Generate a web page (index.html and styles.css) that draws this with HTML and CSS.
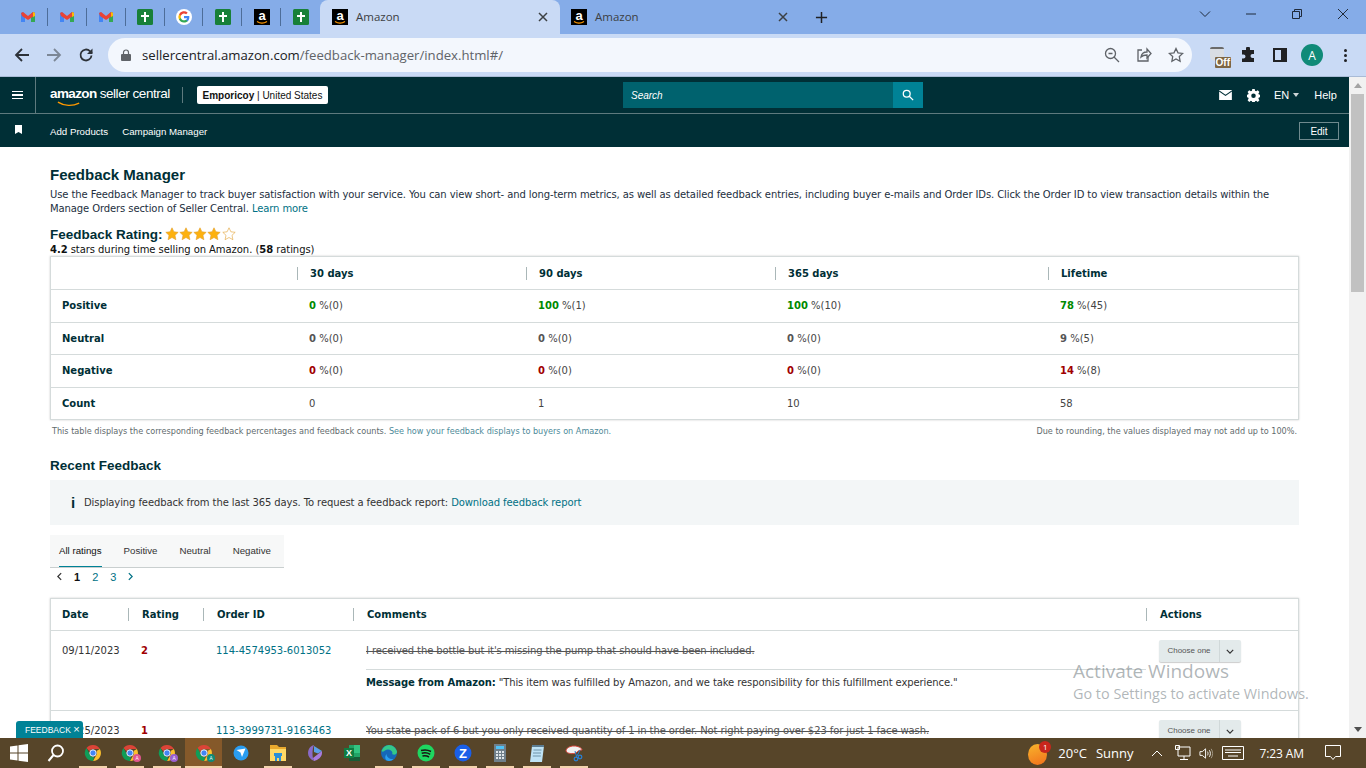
FILE: index.html
```html
<!DOCTYPE html>
<html lang="en">
  <head>
    <meta charset="UTF-8" />
    <meta name="viewport" content="width=device-width, initial-scale=1.0" />
    <title>Feedback Manager</title>
    <link rel="stylesheet" href="styles.css">
  </head>
  <body>
    <svg class="sprites" width="0" height="0">
      <symbol id="gmail" viewBox="0 0 16 16">
        <path d="M1 13V4l2-1 2 2v8z" fill="#4285f4"/>
        <path d="M11 13V5l2-2 2 1v9z" fill="#34a853"/>
        <path d="M1 4l2-1 5 4 5-4 2 1-1 3-6 4-6-4z" fill="#ea4335"/>
        <path d="M13 3l2 1v3l-2 1z" fill="#fbbc04"/>
      </symbol>
      <symbol id="tasks" viewBox="0 0 16 16">
        <rect width="16" height="16" rx="1.5" fill="#188038"/>
        <path d="M7 3h2v3h3v2H9v5H7V8H4V6h3z" fill="#fff"/>
      </symbol>
      <symbol id="google" viewBox="0 0 18 18">
        <circle cx="9" cy="9" r="9" fill="#fff"/>
        <path d="M15 9.2c0-.5 0-.9-.1-1.3H9v2.5h3.400a3 3 0 0 1-1.300 1.900v1.600h2.100c1.200-1.100 1.800-2.800 1.800-4.700z" fill="#4285f4"/>
        <path d="M9 15.200c1.700 0 3.100-.6 4.200-1.500l-2.100-1.600c-.6.4-1.300.6-2.100.6-1.600 0-3-1.100-3.500-2.600H3.400v1.700A6.200 6.200 0 0 0 9 15.200z" fill="#34a853"/>
        <path d="M5.500 10.100a3.800 3.800 0 0 1 0-2.400V6H3.400a6.200 6.200 0 0 0 0 5.800z" fill="#fbbc04"/>
        <path d="M9 5.100c.9 0 1.700.3 2.400.9l1.800-1.800A6.200 6.200 0 0 0 3.400 6l2.100 1.700C6 6.200 7.400 5.100 9 5.100z" fill="#ea4335"/>
      </symbol>
      <symbol id="amazon" viewBox="0 0 16 16">
        <rect width="16" height="16" fill="#000"/>
        <text x="8" y="11" text-anchor="middle" font-family="Liberation Sans" font-weight="700" font-size="13" fill="#fff">a</text>
        <path d="M3 12.500c3 2 7 2 10 0" fill="none" stroke="#f90" stroke-width="1.200"/>
      </symbol>
      <symbol id="chrome" viewBox="0 0 18 18">
        <path d="M9 1a8 8 0 0 1 6.900 4H9a4 4 0 0 0-3.600 2.300L2.500 4.100A8 8 0 0 1 9 1z" fill="#db4437"/>
        <path d="M15.900 5A8 8 0 0 1 9 17l3.400-6A4 4 0 0 0 12.500 7z" fill="#fbc02d"/>
        <path d="M9 17a8 8 0 0 1-6.500-12.900L5.600 10A4 4 0 0 0 10 12.900z" fill="#0f9d58"/>
        <circle cx="9" cy="9" r="3.200" fill="#4285f4" stroke="#fff" stroke-width=".9"/>
      </symbol>
      <symbol id="star" viewBox="0 0 14 14">
        <path d="M7 .8l1.900 4 4.300.5-3.200 3 .9 4.400L7 10.500l-3.900 2.200.9-4.400-3.200-3 4.300-.5z"/>
      </symbol>
    </svg>

    <div class="tabstrip">
      <div class="pinned">
        <div class="pin"><svg class="fav"><use href="#gmail"/></svg></div>
        <div class="pin"><svg class="fav"><use href="#gmail"/></svg></div>
        <div class="pin"><svg class="fav"><use href="#gmail"/></svg></div>
        <div class="pin"><svg class="fav"><use href="#tasks"/></svg></div>
        <div class="pin"><svg class="fav"><use href="#google"/></svg></div>
        <div class="pin"><svg class="fav"><use href="#tasks"/></svg></div>
        <div class="pin"><svg class="fav"><use href="#amazon"/></svg></div>
        <div class="pin last"><svg class="fav"><use href="#tasks"/></svg></div>
      </div>
      <div class="tab active">
        <svg class="fav"><use href="#amazon"/></svg>
        <span class="tab-title">Amazon</span>
        <svg class="tab-close" viewBox="0 0 10 10"><path d="M1 1l8 8M9 1l-8 8"/></svg>
      </div>
      <div class="tab">
        <svg class="fav"><use href="#amazon"/></svg>
        <span class="tab-title">Amazon</span>
        <svg class="tab-close" viewBox="0 0 10 10"><path d="M1 1l8 8M9 1l-8 8"/></svg>
      </div>
      <svg class="new-tab" viewBox="0 0 14 14"><path d="M7 1v12M1 7h12"/></svg>
      <div class="window-btns">
        <svg viewBox="0 0 12 12"><path d="M1 3.500l5 5 5-5"/></svg>
        <svg viewBox="0 0 12 12"><path d="M1 6h10"/></svg>
        <svg viewBox="0 0 12 12"><path d="M1.500 3.500h7v7h-7zM3.500 3.500v-2h7v7h-2"/></svg>
        <svg viewBox="0 0 12 12"><path d="M1 1l10 10M11 1L1 11"/></svg>
      </div>
    </div>

    <div class="toolbar">
      <svg class="nav-icon" viewBox="0 0 16 16"><path d="M15 8H2M8 2L2 8l6 6"/></svg>
      <svg class="nav-icon dim" viewBox="0 0 16 16"><path d="M1 8h13M8 2l6 6-6 6"/></svg>
      <svg class="nav-icon" viewBox="0 0 16 16"><path d="M13.500 8.500a5.500 5.500 0 1 1-1.600-4.400L14 6"/><path class="solid" d="M14.500 1.500v5.500H9z"/></svg>
      <div class="omnibox">
        <svg class="lock" viewBox="0 0 10 12"><path d="M2.500 5V3.500a2.500 2.500 0 0 1 5 0V5" fill="none" stroke="#5f6368" stroke-width="1.200"/><rect y="5" width="10" height="7" rx="1" fill="#5f6368"/></svg>
        <span class="url">sellercentral.amazon.com<span class="url-path">/feedback-manager/index.html#/</span></span>
        <div class="omni-icons">
          <svg viewBox="0 0 16 16"><circle cx="6.500" cy="6.500" r="5"/><path d="M10 10l5 5M4.500 6.500h4"/></svg>
          <svg viewBox="0 0 16 16"><path d="M6 3H2v11h10v-4"/><path d="M5 10c.5-3.500 3-5 6-5V2l4 4.500L11 11V8c-2.500 0-4.500.5-6 2z"/></svg>
          <svg viewBox="0 0 16 16"><path d="M8 1.500l2 4.300 4.700.6-3.400 3.200.8 4.700L8 12l-4.100 2.300.8-4.700L1.300 6.400 6 5.800z"/></svg>
        </div>
      </div>
      <div class="ext-icons">
        <div class="ext-off"><span class="off-cup"></span><span class="off-tag">Off</span></div>
        <svg class="ext" viewBox="0 0 16 16"><path class="solid-dark" d="M6 1.500a2 2 0 0 1 4 0V3h4v4h-1.500a2 2 0 0 0 0 4H14v4H2v-3.500H3.500a2 2 0 0 0 0-4H2V3h4z"/></svg>
        <svg class="ext" viewBox="0 0 16 16"><path class="solid-dark" d="M1 1h14v14H1zM3 3v10h6V3z" fill-rule="evenodd"/></svg>
        <div class="avatar">A</div>
        <div class="menu-dots"><i></i><i></i><i></i></div>
      </div>
    </div>

    <div class="viewport">
      <div class="page">
        <header class="topbar">
          <div class="burger"><i></i><i></i><i></i></div>
          <div class="logo">
            <span class="logo-amazon">amazon</span><span class="logo-seller">seller central</span>
            <svg class="logo-smile" viewBox="0 0 26 6"><path d="M1 1c7 4.500 16 4.500 23 1" fill="none" stroke="#f90" stroke-width="1.400"/></svg>
          </div>
          <div class="logo-sep"></div>
          <div class="account"><b>Emporicoy</b> | United States</div>
          <div class="searchbox">
            <span class="search-text">Search</span>
            <div class="search-btn">
              <svg viewBox="0 0 14 14"><circle cx="5.500" cy="5.500" r="4"/><path d="M8.500 8.500l4.500 4.500"/></svg>
            </div>
          </div>
          <div class="top-right">
            <svg class="mail" viewBox="0 0 14 11"><path d="M0 0h14v11H0z" fill="#fff"/><path d="M0 1l7 5 7-5" fill="none" stroke="#002f36" stroke-width="1.200"/></svg>
            <svg class="gear" viewBox="0 0 16 16"><path fill-rule="evenodd" d="M6.500 0h3l.4 2.200 1.400.6L13.200 1.500l2.100 2.100L14 5.500l.6 1.400 1.400.3v3l-1.400.3-.6 1.400 1.300 1.900-2.100 2.100-1.900-1.300-1.400.6-.4 1.500h-3l-.4-1.500-1.400-.6-1.900 1.300L.7 13.800 2 11.900l-.6-1.400L0 10.200v-3l1.400-.3.600-1.400L.7 3.600l2.100-2.100 1.900 1.300 1.400-.6zM8 5.500a2.800 2.800 0 1 0 0 5.600 2.800 2.800 0 0 0 0-5.600z" fill="#fff"/></svg>
            <span class="lang">EN</span><span class="caret"></span>
            <span class="help">Help</span>
          </div>
        </header>
        <nav class="subbar">
          <svg class="bookmark" viewBox="0 0 7 9"><path d="M0 0h7v9L3.500 7 0 9z" fill="#fff"/></svg>
          <a class="sub-link">Add Products</a>
          <a class="sub-link">Campaign Manager</a>
          <button class="edit-btn">Edit</button>
        </nav>

        <main class="content">
          <h1 class="page-title">Feedback Manager</h1>
          <p class="intro">Use the Feedback Manager to track buyer satisfaction with your service. You can view short- and long-term metrics, as well as detailed feedback entries, including buyer e-mails and Order IDs. Click the Order ID to view transaction details within the Manage Orders section of Seller Central. <a class="link">Learn more</a></p>

          <div class="rating-head">
            <h2>Feedback Rating:</h2>
            <div class="stars">
              <svg class="star"><use href="#star"/></svg>
              <svg class="star"><use href="#star"/></svg>
              <svg class="star"><use href="#star"/></svg>
              <svg class="star"><use href="#star"/></svg>
              <svg class="star empty"><use href="#star"/></svg>
            </div>
          </div>
          <p class="rating-sub"><b>4.2</b> stars during time selling on Amazon. (<b>58</b> ratings)</p>

          <div class="stats">
            <div class="stats-row stats-head">
              <div></div>
              <div class="th">30 days</div>
              <div class="th">90 days</div>
              <div class="th">365 days</div>
              <div class="th">Lifetime</div>
            </div>
            <div class="stats-row">
              <div class="row-label">Positive</div>
              <div><b class="good">0</b> %(0)</div>
              <div><b class="good">100</b> %(1)</div>
              <div><b class="good">100</b> %(10)</div>
              <div><b class="good">78</b> %(45)</div>
            </div>
            <div class="stats-row">
              <div class="row-label">Neutral</div>
              <div><b class="mid">0</b> %(0)</div>
              <div><b class="mid">0</b> %(0)</div>
              <div><b class="mid">0</b> %(0)</div>
              <div><b class="mid">9</b> %(5)</div>
            </div>
            <div class="stats-row">
              <div class="row-label">Negative</div>
              <div><b class="bad">0</b> %(0)</div>
              <div><b class="bad">0</b> %(0)</div>
              <div><b class="bad">0</b> %(0)</div>
              <div><b class="bad">14</b> %(8)</div>
            </div>
            <div class="stats-row">
              <div class="row-label">Count</div>
              <div>0</div>
              <div>1</div>
              <div>10</div>
              <div>58</div>
            </div>
          </div>
          <div class="stats-note">
            <span>This table displays the corresponding feedback percentages and feedback counts. <a class="link">See how your feedback displays to buyers on Amazon.</a></span>
            <span>Due to rounding, the values displayed may not add up to 100%.</span>
          </div>

          <h2 class="recent-title">Recent Feedback</h2>
          <div class="info-box">
            <span class="info-i">i</span>
            <span>Displaying feedback from the last 365 days. To request a feedback report: <a class="link">Download feedback report</a></span>
          </div>

          <div class="rating-tabs">
            <span class="rating-tab current">All ratings</span>
            <span class="rating-tab">Positive</span>
            <span class="rating-tab">Neutral</span>
            <span class="rating-tab">Negative</span>
          </div>
          <div class="pager">
            <svg viewBox="0 0 6 10"><path d="M5 1L1 5l4 4"/></svg>
            <span class="page-num current">1</span>
            <span class="page-num">2</span>
            <span class="page-num">3</span>
            <svg class="next" viewBox="0 0 6 10"><path d="M1 1l4 4-4 4"/></svg>
          </div>

          <div class="reviews">
            <div class="review-row review-head">
              <div>Date</div>
              <div class="th">Rating</div>
              <div class="th">Order ID</div>
              <div class="th">Comments</div>
              <div class="th">Actions</div>
            </div>
            <div class="review-row">
              <div>09/11/2023</div>
              <div><b class="bad">2</b></div>
              <div><a class="link">114-4574953-6013052</a></div>
              <div>
                <div class="struck">I received the bottle but it's missing the pump that should have been included.</div>
                <div class="amz-msg"><b>Message from Amazon:</b> "This item was fulfilled by Amazon, and we take responsibility for this fulfillment experience."</div>
              </div>
              <div><div class="choose"><span>Choose one</span><svg viewBox="0 0 10 6"><path d="M1 1l4 4 4-4"/></svg></div></div>
            </div>
            <div class="review-row">
              <div>08/25/2023</div>
              <div><b class="bad">1</b></div>
              <div><a class="link">113-3999731-9163463</a></div>
              <div>
                <div class="struck">You state pack of 6 but you only received quantity of 1 in the order. Not right paying over $23 for just 1 face wash.</div>
              </div>
              <div><div class="choose"><span>Choose one</span><svg viewBox="0 0 10 6"><path d="M1 1l4 4 4-4"/></svg></div></div>
            </div>
          </div>
        </main>
      </div>
      <div class="scrollbar">
        <span class="arrow up"></span>
        <div class="thumb"></div>
        <span class="arrow down"></span>
      </div>
      <div class="feedback-tag">FEEDBACK <span class="tag-x">×</span></div>
      <div class="activate">
        <div class="activate-big">Activate Windows</div>
        <div class="activate-small">Go to Settings to activate Windows.</div>
      </div>
    </div>

    <footer class="taskbar">
      <div class="task-slot">
        <svg class="t-icon" viewBox="0 0 18 18"><path d="M0 2.500l7.500-1V8.500H0zM8.500 1.300L18 0v8.500H8.500zM0 9.500h7.500v7L0 15.500zM8.500 9.500H18V18l-9.500-1.300z" fill="#fff"/></svg>
      </div>
      <div class="task-slot">
        <svg class="t-icon" viewBox="0 0 18 18"><circle cx="10.500" cy="7" r="5.500" fill="none" stroke="#fff" stroke-width="1.800"/><path d="M6.500 11l-5 6" stroke="#fff" stroke-width="2"/></svg>
      </div>
      <div class="task-slot running"><svg class="t-icon"><use href="#chrome"/></svg></div>
      <div class="task-slot running"><svg class="t-icon"><use href="#chrome"/></svg><span class="chrome-badge pink">A</span></div>
      <div class="task-slot running"><svg class="t-icon"><use href="#chrome"/></svg><span class="chrome-badge purple">A</span></div>
      <div class="task-slot current"><svg class="t-icon"><use href="#chrome"/></svg><span class="chrome-badge teal">A</span></div>
      <div class="task-slot">
        <svg class="t-icon" viewBox="0 0 18 18"><circle cx="9" cy="9" r="7.500" fill="#2a9df0"/><path d="M4.500 6l9-1.500L10 13 8.500 8.500z" fill="#fff"/></svg>
      </div>
      <div class="task-slot running">
        <svg class="t-icon" viewBox="0 0 18 18"><path d="M1 1h7l2 2h7v14H1z" fill="#e8a92e"/><path d="M1 5h16v12H1z" fill="#ffd966"/><path d="M6 10h6v7h-2v-3H8v3H6z" fill="#2a8fd8"/><path d="M5 9h8v3H5z" fill="#2a8fd8"/></svg>
      </div>
      <div class="task-slot">
        <svg class="t-icon" viewBox="0 0 18 18"><path d="M8 1c-4 1-6 4.500-6 8s2 6 6 8c-2-3-2-12 0-16z" fill="#8a6ac8"/><path d="M8 2l8 5-4 2.500L8 8z" fill="#5aa0e8"/><path d="M16 9c0 4-4 7-8 8l-1-3 9-7z" fill="#a87ce0"/></svg>
      </div>
      <div class="task-slot">
        <svg class="t-icon" viewBox="0 0 18 18"><path d="M6 1h11v16H6z" fill="#21a366"/><path d="M11 1h6v8h-6z" fill="#33c481"/><path d="M6 13h11v4H6z" fill="#185c37"/><rect x="1" y="4" width="10" height="10" fill="#107c41"/><text x="6" y="12" text-anchor="middle" font-family="Liberation Sans" font-weight="700" font-size="9" fill="#fff">X</text></svg>
      </div>
      <div class="task-slot running">
        <svg class="t-icon" viewBox="0 0 18 18"><circle cx="9" cy="9" r="8" fill="#1668b8"/><path d="M1.500 7C3 3 6 1 9 1c4 0 7 3 8 6.500.3 2.500-2 3.500-4 3-1-.2-1-1-.5-1.500C12 6 8 4.500 5 6.500 3 8 2 8 1.500 7z" fill="#34c88a"/><path d="M6.500 10c0 3 3 5.500 7 5-1 1-3 2-4.500 2-3.500 0-5-3.500-2.500-7z" fill="#2aa0f0"/></svg>
      </div>
      <div class="task-slot running">
        <svg class="t-icon" viewBox="0 0 18 18"><circle cx="9" cy="9" r="8.500" fill="#1ed760"/><path d="M4 6.500c3.500-1 7-.7 10 1M4.700 9.300c3-.8 6-.5 8.500 1M5.500 12c2.500-.5 4.500-.3 6.500 1" fill="none" stroke="#191414" stroke-width="1.500"/></svg>
      </div>
      <div class="task-slot running">
        <svg class="t-icon" viewBox="0 0 18 18"><circle cx="9" cy="9" r="8.500" fill="#1a5fe8"/><text x="9" y="13.500" text-anchor="middle" font-family="Liberation Sans" font-weight="700" font-size="13" fill="#fff">Z</text></svg>
      </div>
      <div class="task-slot running">
        <svg class="t-icon" viewBox="0 0 18 18"><rect x="3" y="0" width="12" height="18" fill="#6f7f8a"/><rect x="5" y="2" width="8" height="3" fill="#4fc3f7"/><path d="M5 7h2v2H5zM8 7h2v2H8zM11 7h2v2h-2zM5 10h2v2H5zM8 10h2v2H8zM11 10h2v2h-2zM5 13h2v2H5zM8 13h2v2H8zM11 13h2v2h-2z" fill="#dfe6ea"/></svg>
      </div>
      <div class="task-slot running">
        <svg class="t-icon" viewBox="0 0 18 18"><path d="M4 2h12l-2 16H2z" fill="#bfe3f5"/><path d="M4 1h12v2H4z" fill="#5c7d92"/><path d="M5.500 6h8M5 9h8M4.800 12h8" stroke="#6f93a8"/></svg>
      </div>
      <div class="task-slot running">
        <svg class="t-icon" viewBox="0 0 18 18"><path d="M1 7c0-3 4-5 8-5s8 2 8 4c-3 0-4 1-6 3-3 1-9 1-10-2z" fill="#f2f2f2" stroke="#d9453b"/><circle cx="11" cy="15" r="1.800" fill="none" stroke="#2a7fd0" stroke-width="1.300"/><circle cx="15" cy="13" r="1.800" fill="none" stroke="#2a7fd0" stroke-width="1.300"/><path d="M10 7l2 7M15 6l-3 6" stroke="#2a7fd0"/></svg>
      </div>

      <div class="tray">
        <div class="weather"><span class="sun"></span><span class="sun-badge">1</span></div>
        <span class="temp">20°C</span>
        <span class="sky">Sunny</span>
        <svg class="tray-chev" viewBox="0 0 12 8"><path d="M1 7l5-5 5 5"/></svg>
        <svg class="tray-net" viewBox="0 0 16 16"><path d="M3 2h12v9H3zM9 11v3M5 14.500h8M.5.500h4v4h-4z"/></svg>
        <svg class="tray-vol" viewBox="0 0 16 16"><path d="M1 6h2.500L7 3v10l-3.500-3H1zM9 6c.8 1.300.8 2.700 0 4M11 4.500c1.500 2 1.500 5 0 7"/><path class="faint" d="M13 3c2 3 2 7 0 10"/></svg>
        <svg class="tray-kbd" viewBox="0 0 22 14"><path d="M.5.500h21v13H.5zM3 4h16M3 6.500h16M6 10h10" /></svg>
        <span class="clock">7:23 AM</span>
        <svg class="tray-note" viewBox="0 0 16 16"><path d="M.5.500h15v11h-5l-2.500 3-2.500-3h-5z"/></svg>
      </div>
    </footer>
  </body>
</html>
```

FILE: styles.css
```css
* {
  margin: 0;
  padding: 0;
  box-sizing: border-box;
}

body,
html {
  height: 100%;
  width: 100%;
  overflow: hidden;
}

body {
  display: flex;
  flex-direction: column;
  font-family: "DejaVu Sans", Verdana, sans-serif;
  font-size: 10px;
  color: #0f1111;
}

.sprites {
  position: absolute;
}

/* browser chrome */

.tabstrip {
  height: 34px;
  flex: none;
  background-color: #85ace8;
  display: flex;
  align-items: flex-end;
  font-family: "Open Sans", sans-serif;
  font-size: 11px;
}

.pinned {
  display: flex;
  width: 320px;
  height: 34px;
  padding-left: 9px;
}

.pin {
  width: 39px;
  height: 34px;
  display: flex;
  align-items: center;
  justify-content: center;
  position: relative;
}

.pin::after {
  content: "";
  position: absolute;
  right: 0;
  top: 8px;
  height: 18px;
  width: 1px;
  background-color: #4d6d99;
}

.pin.last::after {
  display: none;
}

.fav {
  width: 16px;
  height: 16px;
  flex: none;
}

.tab {
  width: 240px;
  height: 34px;
  display: flex;
  align-items: center;
  padding: 0 12px 0 11px;
  color: #3c4043;
}

.tab.active {
  background-color: #c9daf5;
  border-radius: 8px 8px 0 0;
  padding-left: 12px;
}

.tab-title {
  margin: -2px 0 0 8px;
  flex: 1;
  font-size: 11.500px;
}

.tab-close {
  width: 10px;
  height: 10px;
  fill: none;
  stroke: #3c4043;
  stroke-width: 1.500;
}

.new-tab {
  width: 13px;
  height: 13px;
  margin: 0 0 10px 15px;
  fill: none;
  stroke: #202124;
  stroke-width: 1.600;
}

.window-btns {
  margin-left: auto;
  display: flex;
  gap: 34px;
  padding: 0 17px 14px 0;
}

.window-btns svg {
  width: 12px;
  height: 12px;
  fill: none;
  stroke: #1f2a3a;
  stroke-width: 1;
}

.toolbar {
  height: 43px;
  flex: none;
  background-color: #c9daf5;
  border-bottom: 1px solid #a9bbd6;
  display: flex;
  align-items: center;
  padding: 0 0 0 14px;
}

.nav-icon {
  width: 16px;
  height: 16px;
  margin-right: 16px;
  fill: none;
  stroke: #2c3138;
  stroke-width: 1.800;
}

.nav-icon.dim {
  stroke: #7c8796;
}

.nav-icon .solid {
  fill: #2c3138;
  stroke: none;
}

.omnibox {
  width: 1084px;
  height: 34px;
  margin-left: -2px;
  background-color: #f3f7fd;
  border-radius: 17px;
  display: flex;
  align-items: center;
  padding: 0 8px 0 13px;
}

.lock {
  width: 10px;
  height: 12px;
  flex: none;
}

.url {
  margin-left: 11px;
  font-family: "Open Sans", sans-serif;
  font-size: 13.170px;
  color: #202124;
}

.url-path {
  color: #5f6368;
}

.omni-icons {
  margin-left: auto;
  display: flex;
  gap: 16px;
}

.omni-icons svg {
  width: 16px;
  height: 16px;
  fill: none;
  stroke: #5f6368;
  stroke-width: 1.300;
}

.ext-icons {
  flex: 1;
  display: flex;
  align-items: center;
  padding-left: 18px;
}

.ext-off {
  width: 21px;
  height: 22px;
  position: relative;
  margin-top: 5px;
}

.off-cup {
  position: absolute;
  left: 0;
  top: 0;
  width: 14px;
  height: 14px;
  border-radius: 2px 2px 5px 5px;
  background-color: #d9dde3;
  border-top: 2px solid #6b6b6b;
}

.off-tag {
  position: absolute;
  right: 0;
  bottom: 1px;
  padding: 0 1px;
  background-color: #7d6644;
  color: #fff;
  font-family: "Liberation Sans", sans-serif;
  font-size: 10px;
  font-weight: 700;
  line-height: 11px;
  border-radius: 1px;
}

.ext {
  width: 16px;
  height: 16px;
  margin-left: 0;
}

.ext-off + .ext {
  margin-left: 9px;
}

.ext + .ext {
  margin-left: 16px;
}

.solid-dark {
  fill: #202124;
}

.avatar {
  width: 22px;
  height: 22px;
  margin-left: 13px;
  border-radius: 50%;
  background-color: #0f8a78;
  color: #fff;
  font-family: "Open Sans", sans-serif;
  font-size: 12px;
  display: flex;
  align-items: center;
  justify-content: center;
}

.menu-dots {
  margin-left: 21px;
  display: flex;
  flex-direction: column;
  gap: 2px;
}

.menu-dots i {
  width: 3px;
  height: 3px;
  border-radius: 50%;
  background-color: #202124;
}

/* seller central page */

.viewport {
  flex: 1;
  min-height: 0;
  display: flex;
  position: relative;
}

.page {
  flex: 1;
  min-width: 0;
  overflow: hidden;
}

.topbar {
  height: 37px;
  background-color: #002f36;
  border-bottom: 1px solid #5e7a7e;
  display: flex;
  align-items: center;
  color: #fff;
  font-family: "Liberation Sans", sans-serif;
}

.burger {
  width: 36px;
  height: 36px;
  border-right: 1px solid #5e7a7e;
  display: flex;
  flex-direction: column;
  justify-content: center;
  gap: 2px;
  padding: 0 12px;
  flex: none;
}

.burger i {
  height: 1.500px;
  background-color: #fff;
}

.logo {
  margin-left: 14px;
  width: 132px;
  position: relative;
  display: flex;
  align-items: baseline;
  flex: none;
  padding-bottom: 3px;
}

.logo-amazon {
  font-size: 13.500px;
  font-weight: 700;
  letter-spacing: -0.6px;
}

.logo-seller {
  font-size: 13.500px;
  margin-left: 3px;
  letter-spacing: -0.45px;
}

.logo-smile {
  position: absolute;
  left: 7px;
  bottom: -3px;
  width: 24px;
  height: 6px;
}

.logo-sep {
  width: 1px;
  height: 16px;
  background-color: #5e7a7e;
  flex: none;
}

.account {
  margin-left: 14px;
  width: 131px;
  height: 18px;
  background-color: #fff;
  color: #0f1111;
  border-radius: 2px;
  font-size: 10px;
  display: flex;
  align-items: center;
  justify-content: center;
  white-space: pre;
  flex: none;
}

.searchbox {
  margin-left: 295px;
  width: 300px;
  height: 26px;
  background-color: #00626e;
  display: flex;
  align-items: center;
  justify-content: space-between;
  padding-left: 8px;
  flex: none;
}

.search-text {
  font-size: 10px;
  font-style: italic;
}

.search-btn {
  width: 30px;
  height: 26px;
  background-color: #008296;
  display: flex;
  align-items: center;
  justify-content: center;
}

.search-btn svg {
  width: 12px;
  height: 12px;
  fill: none;
  stroke: #fff;
  stroke-width: 1.500;
}

.top-right {
  flex: 1;
  display: flex;
  align-items: center;
  padding-left: 296px;
  font-size: 11px;
}

.mail {
  width: 13px;
  height: 10px;
}

.gear {
  width: 13px;
  height: 13px;
  margin-left: 15px;
}

.lang {
  margin-left: 14px;
}

.caret {
  margin-left: 4px;
  border: 3.500px solid transparent;
  border-top: 4px solid #ccd5d7;
  border-bottom: 0;
}

.help {
  margin-left: 15px;
}

.subbar {
  height: 33px;
  background-color: #002f36;
  display: flex;
  align-items: center;
  padding: 1px 10px 0 15px;
  color: #fff;
  font-family: "Liberation Sans", sans-serif;
}

.bookmark {
  width: 7px;
  height: 9px;
  margin: -3px 28px 0 0;
}

.sub-link {
  margin-right: 14px;
  font-size: 9.700px;
}

.edit-btn {
  margin-left: auto;
  width: 40px;
  height: 18px;
  background: none;
  border: 1px solid #6f8a8e;
  color: #fff;
  font-family: "Liberation Sans", sans-serif;
  font-size: 10px;
}

.content {
  padding: 20px 50px 0;
}

.page-title {
  font-family: "Liberation Sans", sans-serif;
  font-size: 15px;
  line-height: 16px;
  font-weight: 700;
  color: #002f36;
}

.intro {
  margin-top: 5px;
  line-height: 14px;
  color: #232f3e;
  letter-spacing: -0.1px;
}

.link {
  color: #007185;
}

.rating-head {
  margin-top: 10px;
  display: flex;
  align-items: center;
  height: 16px;
}

.rating-head h2 {
  font-family: "Liberation Sans", sans-serif;
  font-size: 13.500px;
  font-weight: 700;
  color: #002f36;
}

.stars {
  display: flex;
  margin-left: 2px;
  gap: 0.300px;
}

.star {
  width: 14px;
  height: 14px;
  fill: #fdb10e;
  stroke: #e0a030;
  stroke-width: .6;
}

.star.empty {
  fill: #fff;
}

.rating-sub {
  line-height: 12px;
  margin-top: 2px;
  letter-spacing: -0.06px;
}

.stats {
  border: 1px solid #d5dbdb;
  box-shadow: 0 0 2px rgba(0, 0, 0, 0.2);
}

.stats-row {
  display: grid;
  grid-template-columns: 246px 229px 249px 273px 1fr;
  height: 32.500px;
  align-items: center;
  border-top: 1px solid #d5dbdb;
  color: #444;
}

.stats-row:first-child {
  border-top: 0;
  height: 32px;
}

.stats-row > div {
  padding-left: 12px;
}

.th {
  font-weight: 700;
  color: #002f36;
  border-left: 1px solid #aab7b8;
  line-height: 13px;
}

.stats-head .th,
.row-label {
  font-weight: 700;
  color: #002f36;
}

.row-label {
  padding-left: 11px !important;
}

.good {
  color: #008a00;
}

.mid {
  color: #555;
}

.bad {
  color: #a00000;
}

.stats-note {
  margin-top: 6px;
  padding: 0 2px;
  display: flex;
  justify-content: space-between;
  font-size: 8.120px;
  line-height: 10px;
  color: #5f6b6d;
}

.stats-note .link {
  color: #4d8a99;
}

.recent-title {
  margin-top: 22px;
  font-family: "Liberation Sans", sans-serif;
  font-size: 13.500px;
  line-height: 16px;
  font-weight: 700;
  color: #002f36;
}

.info-box {
  margin-top: 6px;
  height: 45px;
  background-color: #f3f6f7;
  display: flex;
  align-items: center;
  padding-left: 21px;
  color: #333;
  letter-spacing: -0.1px;
}

.info-i {
  font-family: "Liberation Sans", sans-serif;
  font-size: 15px;
  font-weight: 700;
  width: 13px;
  color: #002f36;
}

.rating-tabs {
  margin-top: 10px;
  width: 234px;
  height: 33px;
  background-color: #f7f8f8;
  border-bottom: 1px solid #c9cfcf;
  display: flex;
  padding-left: 9px;
  gap: 22px;
  font-family: "Liberation Sans", sans-serif;
  font-size: 9.700px;
  color: #333;
}

.rating-tab {
  line-height: 31px;
  height: 32px;
}

.rating-tab.current {
  color: #111;
  border-bottom: 1px solid #008296;
}

.pager {
  height: 17px;
  display: flex;
  align-items: center;
  padding-left: 7px;
  gap: 12px;
  font-family: "Liberation Sans", sans-serif;
  font-size: 11px;
}

.pager svg {
  width: 5px;
  height: 9px;
  fill: none;
  stroke: #333;
  stroke-width: 1.500;
}

.pager .next {
  stroke: #007185;
}

.page-num {
  color: #007185;
}

.page-num.current {
  color: #111;
  font-weight: 700;
}

.reviews {
  margin-top: 13px;
  border: 1px solid #d5dbdb;
  box-shadow: 0 0 2px rgba(0, 0, 0, 0.2);
}

.review-row {
  display: grid;
  grid-template-columns: 77px 75px 150px 793px 1fr;
  border-top: 1px solid #d5dbdb;
  padding: 10px 0 0;
  min-height: 80px;
  color: #333;
}

.review-row > div {
  line-height: 20px;
}

.review-row > div:first-child {
  padding-left: 11px;
}

.review-row > div + div {
  padding-left: 13px;
}

.review-row.review-head {
  border-top: 0;
  min-height: 31px;
  padding: 0;
  align-items: center;
  font-weight: 700;
  color: #002f36;
}

.review-head .th {
  line-height: 13px;
}

.struck {
  color: #555;
  text-decoration: line-through;
  letter-spacing: -0.1px;
}

.amz-msg {
  margin-top: 8px;
  border-top: 1px solid #d5dbdb;
  padding-top: 1px;
  line-height: 24px;
  color: #333;
  letter-spacing: -0.1px;
}

.amz-msg b {
  color: #002f36;
}

.choose {
  width: 82px;
  height: 22px;
  margin-top: -1px;
  background-color: #e3eaeb;
  border-radius: 2px;
  box-shadow: 0 1px 1px rgba(0, 0, 0, 0.2);
  display: flex;
  align-items: center;
  font-family: "Liberation Sans", sans-serif;
  font-size: 8px;
  color: #555;
}

.choose span {
  width: 61px;
  text-align: center;
  line-height: 22px;
  border-right: 1px solid #d0d8d9;
}

.choose svg {
  width: 8px;
  height: 5px;
  margin-left: 6px;
  fill: none;
  stroke: #333;
  stroke-width: 1.500;
}

.scrollbar {
  width: 17px;
  flex: none;
  background-color: #f1f1f1;
  display: flex;
  flex-direction: column;
  align-items: center;
}

.arrow {
  flex: none;
  margin: 6px 0;
  border: 4px solid transparent;
  border-top: 0;
  border-bottom: 5px solid #a3a3a3;
}

.arrow.down {
  margin-top: auto;
  border-bottom: 0;
  border-top: 5px solid #505050;
}

.thumb {
  width: 13px;
  height: 198px;
  background-color: #c1c1c1;
}

.feedback-tag {
  position: absolute;
  left: 16px;
  bottom: 0;
  width: 67px;
  height: 17px;
  background-color: #008296;
  border-radius: 3px 3px 0 0;
  color: #fff;
  font-family: "Liberation Sans", sans-serif;
  font-size: 8.500px;
  line-height: 17px;
  padding-left: 9px;
  white-space: nowrap;
}

.tag-x {
  font-size: 11px;
}

.activate {
  position: absolute;
  left: 1073px;
  top: 582px;
  font-family: "Open Sans", sans-serif;
  color: rgba(110, 120, 125, 0.55);
  white-space: nowrap;
}

.activate-big {
  font-size: 19px;
  line-height: 24px;
}

.activate-small {
  font-size: 14.400px;
  line-height: 22px;
}

/* windows taskbar */

.taskbar {
  height: 30px;
  flex: none;
  background-color: #574529;
  display: flex;
  color: #fff;
  font-family: "Open Sans", sans-serif;
}

.task-slot {
  width: 37px;
  height: 30px;
  display: flex;
  align-items: center;
  justify-content: center;
  position: relative;
  flex: none;
}

.task-slot.current {
  background-color: #85592a;
}

.task-slot.running::after,
.task-slot.current::after {
  content: "";
  position: absolute;
  left: 5px;
  right: 4px;
  bottom: 0;
  height: 2px;
  background-color: #f3d3ad;
}

.task-slot.current::after {
  left: 0;
  right: 0;
}

.t-icon {
  width: 18px;
  height: 18px;
}

.chrome-badge {
  position: absolute;
  left: 22px;
  top: 16px;
  width: 8px;
  height: 8px;
  border-radius: 50%;
  color: #fff;
  font-size: 5px;
  line-height: 8px;
  text-align: center;
}

.chrome-badge.pink {
  background-color: #e0568f;
}

.chrome-badge.purple {
  background-color: #9a5fd0;
}

.chrome-badge.teal {
  background-color: #0f8a78;
}

.tray {
  margin-left: auto;
  display: flex;
  align-items: center;
  font-size: 13px;
}

.weather {
  width: 22px;
  height: 24px;
  position: relative;
}

.sun {
  position: absolute;
  left: 1px;
  top: 3px;
  width: 19px;
  height: 21px;
  border-radius: 50%;
  background: linear-gradient(160deg, #f8b52c, #f2701c);
}

.sun-badge {
  position: absolute;
  right: -2px;
  top: 0;
  width: 12px;
  height: 12px;
  border-radius: 50%;
  background-color: #c8261c;
  font-size: 8px;
  line-height: 12px;
  text-align: center;
}

.temp {
  margin-left: 9px;
}

.sky {
  margin-left: 9px;
}

.tray svg {
  fill: none;
  stroke: #fff;
  stroke-width: 1;
}

.tray .faint {
  stroke: #a39a88;
}

.tray-chev {
  width: 12px;
  height: 8px;
  margin-left: 18px;
}

.tray-net {
  width: 16px;
  height: 16px;
  margin-left: 12px;
}

.tray-vol {
  width: 15px;
  height: 15px;
  margin-left: 8px;
}

.tray-kbd {
  width: 22px;
  height: 14px;
  margin-left: 8px;
}

.clock {
  margin-left: 15px;
  font-size: 12px;
  letter-spacing: -0.1px;
}

.tray-note {
  width: 16px;
  height: 16px;
  margin: 0 25px 0 21px;
}
```
